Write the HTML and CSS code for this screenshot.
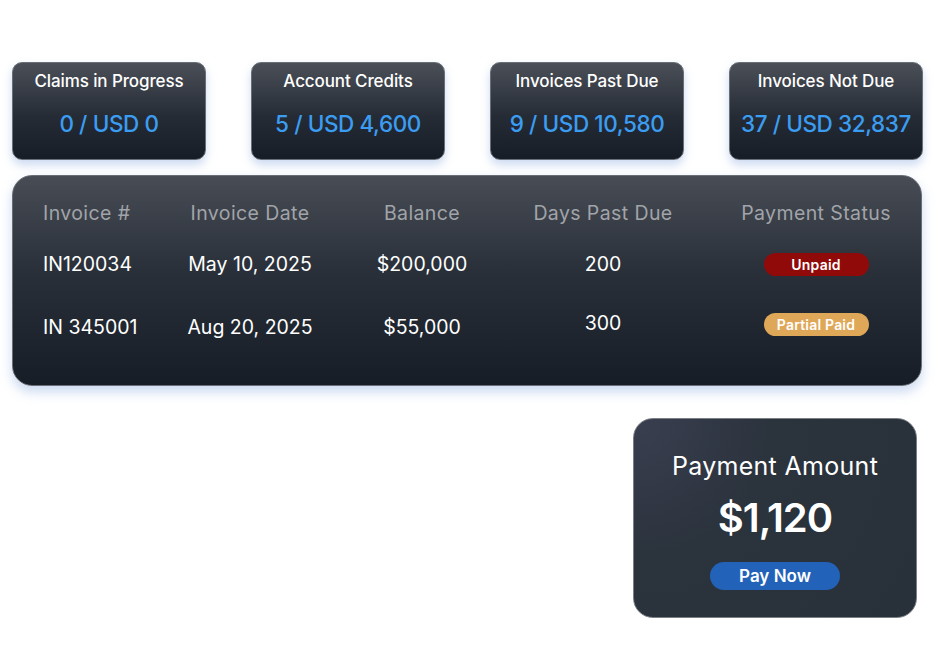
FILE: index.html
```html
<!DOCTYPE html>
<html lang="en">
<head>
    <meta charset="UTF-8">
    <meta name="viewport" content="width=device-width, initial-scale=1.0">
    <title>Invoices</title>
    <link rel="stylesheet" href="styles.css">
</head>
<body>

    <div class="stats">
        <div class="stat">
            <div class="stat-title">Claims in Progress</div>
            <div class="stat-value">0 / USD 0</div>
        </div>
        <div class="stat">
            <div class="stat-title">Account Credits</div>
            <div class="stat-value">5 / USD 4,600</div>
        </div>
        <div class="stat">
            <div class="stat-title">Invoices Past Due</div>
            <div class="stat-value">9 / USD 10,580</div>
        </div>
        <div class="stat">
            <div class="stat-title">Invoices Not Due</div>
            <div class="stat-value">37 / USD 32,837</div>
        </div>
    </div>

    <div class="invoices">
        <div class="row head">
            <div class="cell first">Invoice #</div>
            <div class="cell">Invoice Date</div>
            <div class="cell">Balance</div>
            <div class="cell">Days Past Due</div>
            <div class="cell">Payment Status</div>
        </div>
        <div class="row first-row">
            <div class="cell first">IN120034</div>
            <div class="cell">May 10, 2025</div>
            <div class="cell">$200,000</div>
            <div class="cell">200</div>
            <div class="cell"><span class="badge unpaid">Unpaid</span></div>
        </div>
        <div class="row second-row">
            <div class="cell first">IN 345001</div>
            <div class="cell">Aug 20, 2025</div>
            <div class="cell">$55,000</div>
            <div class="cell raised">300</div>
            <div class="cell raised"><span class="badge partial">Partial Paid</span></div>
        </div>
    </div>

    <div class="pay-wrap">
        <div class="pay-card">
            <div class="pay-label">Payment Amount</div>
            <div class="pay-amount">$1,120</div>
            <button class="pay-btn">Pay Now</button>
        </div>
    </div>

</body>
</html>
```

FILE: styles.css
```css
:root {
    --blau: #3b9df2;
    --grau-text: #a1a4a9;
    --weiss: #FFFFFF;
    --rot: #900a0a;
    --orange: #dfa758;
    --knopf: #2262b8;
}

body {
    margin: 0;
    background-color: var(--weiss);
    font-family: Inter, "Liberation Sans", sans-serif;
    color: var(--weiss);
}

.stats {
    display: flex;
    gap: 45px;
    padding: 62px 0 0 12px;
}

.stat {
    width: 194px;
    height: 98px;
    box-sizing: border-box;
    border-radius: 10px;
    border: 1px solid #6a6f77;
    background: linear-gradient(180deg, #4a4f58 0%, #262c35 55%, #171d27 100%);
    box-shadow: 0px 5px 10px rgba(110, 150, 215, 0.35);
    text-align: center;
}

.stat-title {
    font-size: 17px;
    font-weight: 500;
    margin-top: 8px;
    line-height: 20px;
    letter-spacing: -0.1px;
}

.stat-value {
    font-size: 22.5px;
    font-weight: 500;
    color: var(--blau);
    margin-top: 20px;
    line-height: 26px;
    letter-spacing: -0.4px;
}

.invoices {
    margin: 15px 16px 0 12px;
    height: 211px;
    box-sizing: border-box;
    border-radius: 20px;
    border: 1px solid #6a6f77;
    background: linear-gradient(180deg, #474c55 0%, #2a3039 45%, #161d27 100%);
    box-shadow: 0px 6px 12px rgba(110, 150, 215, 0.35);
    padding: 25px 2px 0 30px;
}

.row {
    display: grid;
    grid-template-columns: 107px 200px 144px 218px 208px;
    align-items: center;
    height: 24px;
    font-size: 19.5px;
    line-height: 24px;
}

.head {
    color: var(--grau-text);
    letter-spacing: 0.4px;
}

.first-row {
    margin-top: 26px;
}

.second-row {
    margin-top: 40px;
}

.cell {
    text-align: center;
    white-space: nowrap;
}

.cell.first {
    text-align: left;
}

.raised {
    margin-top: -8px;
}

.badge {
    display: inline-block;
    width: 105px;
    height: 23px;
    line-height: 23px;
    border-radius: 12px;
    font-size: 14px;
    font-weight: 600;
    letter-spacing: 0.2px;
    vertical-align: middle;
}

.unpaid {
    background-color: var(--rot);
}

.partial {
    background-color: var(--orange);
}

.pay-wrap {
    display: flex;
    justify-content: flex-end;
    padding: 32px 21px 0 0;
}

.pay-card {
    width: 284px;
    height: 200px;
    box-sizing: border-box;
    border-radius: 20px;
    border: 1px solid #7a7f86;
    background: radial-gradient(circle at 0% 0%, #3a3f50 0%, #2b333d 40%, #283139 100%);
    text-align: center;
    padding-top: 32px;
}

.pay-label {
    font-size: 25px;
    line-height: 30px;
    letter-spacing: 0.3px;
}

.pay-amount {
    font-size: 40px;
    font-weight: 600;
    line-height: 48px;
    margin-top: 13px;
    letter-spacing: -1px;
}

.pay-btn {
    margin-top: 20px;
    width: 130px;
    height: 28px;
    border: none;
    border-radius: 14px;
    background-color: var(--knopf);
    color: var(--weiss);
    font-family: Inter, "Liberation Sans", sans-serif;
    font-size: 17px;
    font-weight: 600;
    cursor: pointer;
}
```
